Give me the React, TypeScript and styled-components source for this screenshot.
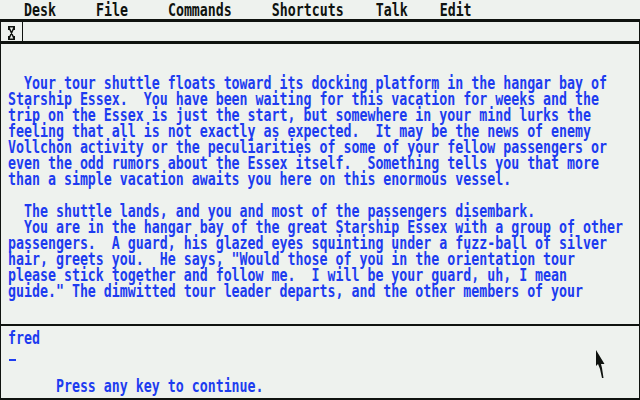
import React from 'react';
import styled, { createGlobalStyle } from 'styled-components';

const INK = '#0f130f';
const BLUE = '#1d3cf0';
const PAPER = '#eef2ee';

const GlobalStyle = createGlobalStyle`
  html, body {
    margin: 0;
    padding: 0;
    background: ${PAPER};
  }
  body {
    width: 640px;
    height: 400px;
    overflow: hidden;
  }
`;

const Screen = styled.div`
  position: relative;
  width: 640px;
  height: 400px;
  display: flex;
  flex-direction: column;
  background: ${PAPER};
  font-family: "DejaVu Sans Mono", "Liberation Mono", monospace;
  font-weight: bold;
  font-size: 13.288px;
  overflow: hidden;
`;

const MenuBar = styled.div`
  height: 16px;
  padding-top: 3px;
  border-bottom: 3px solid ${INK};
  display: flex;
  color: ${INK};
`;

const MenuTitle = styled.div<{ $col: number }>`
  margin-left: ${(p) => p.$col * 8}px;
  height: 16px;
  line-height: 16px;
  white-space: pre;
  transform: scaleY(1.34);
`;

const Window = styled.div`
  flex: 1;
  display: flex;
  flex-direction: column;
  border-left: 1px solid ${INK};
  border-right: 1px solid ${INK};
`;

const TitleBar = styled.div`
  height: 19px;
  border-bottom: 3px solid ${INK};
  display: flex;
`;

const CloseBox = styled.div`
  width: 22px;
  border-right: 1px solid ${INK};
  display: flex;
  align-items: center;
  justify-content: center;
  padding-top: 3px;
  box-sizing: border-box;
`;

const Pane = styled.div<{ $height: number; $top: number }>`
  height: ${(p) => p.$height}px;
  flex: none;
  box-sizing: border-box;
  padding: ${(p) => p.$top}px 0 0 7px;
  border-bottom: 2px solid ${INK};
  color: ${BLUE};
  overflow: hidden;
`;

const Line = styled.div`
  height: 16px;
  line-height: 16px;
  white-space: pre;
  transform: scaleY(1.34);
`;

const CursorRow = styled.div`
  height: 16px;
  box-sizing: border-box;
  padding: 12px 0 0 1px;
`;

const CursorBar = styled.div`
  width: 7px;
  height: 2px;
  background: ${BLUE};
`;

const Pointer = styled.svg`
  position: absolute;
  left: 596px;
  top: 350px;
`;

const menu: [string, number][] = [
  ['Desk', 3],
  ['File', 5],
  ['Commands', 5],
  ['Shortcuts', 5],
  ['Talk', 4],
  ['Edit', 4],
];

const story = [
  '  Your tour shuttle floats toward its docking platform in the hangar bay of',
  'Starship Essex.  You have been waiting for this vacation for weeks and the',
  'trip on the Essex is just the start, but somewhere in your mind lurks the',
  'feeling that all is not exactly as expected.  It may be the news of enemy',
  'Vollchon activity or the peculiarities of some of your fellow passengers or',
  'even the odd rumors about the Essex itself.  Something tells you that more',
  'than a simple vacation awaits you here on this enormous vessel.',
  '',
  '  The shuttle lands, and you and most of the passengers disembark.',
  '  You are in the hangar bay of the great Starship Essex with a group of other',
  'passengers.  A guard, his glazed eyes squinting under a fuzz-ball of silver',
  'hair, greets you.  He says, "Would those of you in the orientation tour',
  'please stick together and follow me.  I will be your guard, uh, I mean',
  'guide." The dimwitted tour leader departs, and the other members of your',
];

function CloseIcon() {
  return (
    <svg width="7" height="14" viewBox="0 0 7 14">
      <path
        d="M0 0.75 H7 M0 13.25 H7 M0.75 0 V4 M6.25 0 V4 M0.75 10 V14 M6.25 10 V14 M1 1.5 L6 12.5 M6 1.5 L1 12.5"
        stroke={INK}
        strokeWidth="1.5"
        fill="none"
      />
    </svg>
  );
}

export default function App() {
  return (
    <>
      <GlobalStyle />
      <Screen>
        <MenuBar>
          {menu.map(([label, col]) => (
            <MenuTitle key={label} $col={col}>
              {label}
            </MenuTitle>
          ))}
        </MenuBar>
        <Window>
          <TitleBar>
            <CloseBox>
              <CloseIcon />
            </CloseBox>
          </TitleBar>
          <Pane $height={282} $top={32}>
            {story.map((t, i) => (
              <Line key={i}>{t}</Line>
            ))}
          </Pane>
          <Pane $height={74} $top={5}>
            <Line>fred</Line>
            <CursorRow>
              <CursorBar />
            </CursorRow>
            <Line> </Line>
            <Line>{'      Press any key to continue.'}</Line>
          </Pane>
        </Window>
        <Pointer width="10" height="30" viewBox="0 0 10 30">
          <path d="M0 0 L0 16 L2 14 L4 19 L6 28 L7.5 28 L6 18 L5 14 L8.5 14 Z" fill={INK} />
        </Pointer>
      </Screen>
    </>
  );
}
